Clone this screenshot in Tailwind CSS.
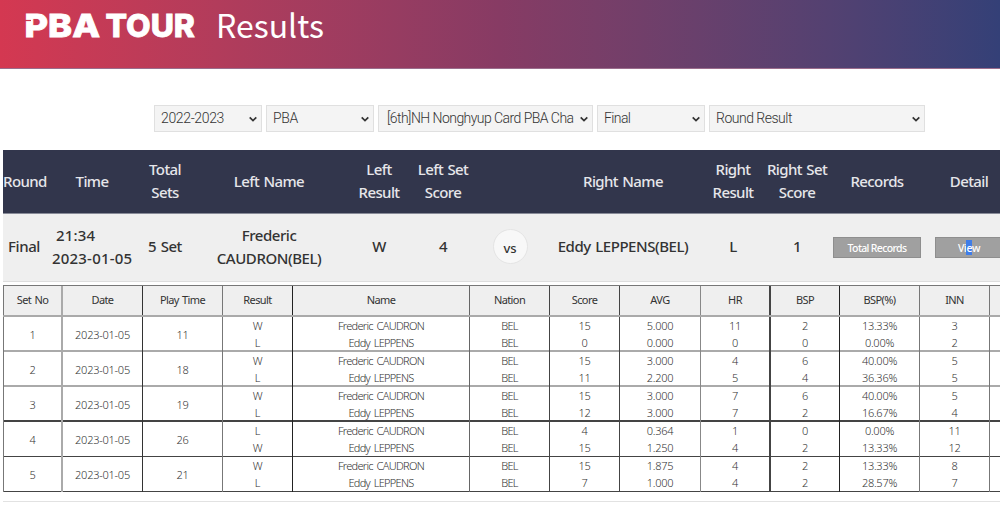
<!DOCTYPE html>
<html lang="en">
<head>
    <meta charset="UTF-8">
    <meta name="viewport" content="width=device-width, initial-scale=1.0">
    <title>PBA TOUR Results</title>
    <script src="https://cdn.jsdelivr.net/npm/@tailwindcss/browser@4"></script>
</head>
<body class="bg-white w-[1000px] h-[511px] overflow-hidden font-['Noto_Sans',sans-serif]">
    <!-- Header -->
    <header class="h-[69px] flex items-start border-b border-[#9a6d8c] bg-linear-to-r from-[#d43851] via-[#873b64] to-[#344077]">
        <svg class="w-[200px] h-[50px] shrink-0" viewBox="0 0 200 50" fill="#fff" stroke="#fff" stroke-width="0.8" font-family="Inter" font-weight="800" font-size="31.500">
            <text x="24.500" y="37.200" textLength="75.500" lengthAdjust="spacingAndGlyphs">PBA</text>
            <text x="105.500" y="37.200" textLength="89.500" lengthAdjust="spacingAndGlyphs">TOUR</text>
            <path d="M23 20.500h8" stroke="#c93852" stroke-width="1.200" />
        </svg>
        <h1 class="ml-4 mt-1 h-10 leading-10 text-[32px] text-white whitespace-nowrap font-['Noto_Sans_CJK_KR',sans-serif]">Results</h1>
    </header>

    <!-- Filters -->
    <div id="filters" class="mt-9 ml-[154px] h-[27px] flex gap-1 text-[14px] font-light text-[#333] font-['Roboto',sans-serif]"></div>

    <!-- Match summary -->
    <section class="mt-[18px] ml-[3px] w-[1010px] text-[15px] leading-[23px] font-medium text-center">
        <div class="h-16 pb-px grid grid-cols-[42px_94px_52px_156px_64px_64px_70px_156px_64px_64px_96px_88px] items-center bg-[#32364c] text-[#e6e6ea] border-b border-[#888b98] whitespace-nowrap tracking-[-0.6px] [word-spacing:1px]">
            <div>Round</div>
            <div>Time</div>
            <div>Total<br>Sets</div>
            <div>Left Name</div>
            <div>Left<br>Result</div>
            <div>Left Set<br>Score</div>
            <div></div>
            <div>Right Name</div>
            <div>Right<br>Result</div>
            <div>Right Set<br>Score</div>
            <div>Records</div>
            <div>Detail</div>
        </div>
        <div class="h-[68px] pb-0.5 grid grid-cols-[42px_94px_52px_156px_64px_64px_70px_156px_64px_64px_96px_88px] items-center bg-[#efefef] text-[#333] border-b border-[#ddd] whitespace-nowrap tracking-[-0.45px] [word-spacing:1px]">
            <div>Final</div>
            <div class="text-left pl-[7px] tracking-[0.2px]"><span class="ml-1">21:34</span><br>2023-01-05</div>
            <div>5 Set</div>
            <div>Frederic<br>CAUDRON(BEL)</div>
            <div>W</div>
            <div>4</div>
            <div class="justify-self-center size-[35px] rounded-full border border-[#e4e4e4] bg-[#f8f8f8] text-[13px] leading-[36px] tracking-normal">vs</div>
            <div>Eddy LEPPENS(BEL)</div>
            <div>L</div>
            <div>1</div>
            <button class="justify-self-center mt-px w-[88px] h-[21px] border border-[#8e8e8e] bg-[#a0a0a0] text-white text-[10.5px] leading-[21px] tracking-[-0.65px]">Total Records</button>
            <button class="justify-self-start ml-2.5 mt-px w-[88px] h-[21px] pr-5 border border-[#8e8e8e] bg-[#a0a0a0] text-white text-[10.5px] leading-[21px] tracking-[-0.4px]">Vi<span class="inline-block h-[15px] leading-[17px] align-top mt-0.5 bg-[#3f7de8]">e</span>w</button>
        </div>
    </section>

    <!-- Set table -->
    <section id="sets" class="mt-[3px] ml-[3px] w-[1040px] border-t border-[#777] text-[11px] text-center text-[#333]"></section>
    <div class="mt-[9px] ml-[3px] h-px bg-[#e2e2e2]"></div>

    <script>
        const filters = [
            ['2022-2023', 'w-[108px]', 'pl-1.5 tracking-[-0.35px]'],
            ['PBA', 'w-[108px]', 'pl-1.5 tracking-[-0.4px]'],
            ['[6th]NH Nonghyup Card PBA Cha', 'w-[215px]', 'pl-2 tracking-[-0.55px]'],
            ['Final', 'w-[108px]', 'pl-1.5 tracking-[-0.6px]'],
            ['Round Result', 'w-[216px]', 'pl-1.5 tracking-[-0.5px]'],
        ];
        document.getElementById('filters').innerHTML = filters.map(([label, width, pad]) => `
            <button class="${width} ${pad} pr-1 shrink-0 flex items-center justify-between border border-[#e0e0e0] bg-[#f4f4f4] whitespace-nowrap">
                <span>${label}</span>
                <svg class="w-2 h-2 shrink-0" viewBox="0 0 8 8" fill="none" stroke="#333" stroke-width="1.7"><path d="M0.700 2.300L4 5.600l3.300-3.300" /></svg>
            </button>`).join('');

        const heads = ['Set No', 'Date', 'Play Time', 'Result', 'Name', 'Nation', 'Score', 'AVG', 'HR', 'BSP', 'BSP(%)', 'INN', ''];
        // left edge of each column
        const edges = [
            'border-l border-[#777]', 'border-l-2 border-[#aaa]', 'border-l border-[#333]', 'border-l border-[#777]',
            'border-l border-[#222]', 'border-l border-[#666]', 'border-l border-[#444]', 'border-l border-[#444]',
            'border-l border-[#888]', 'border-l-2 border-[#444]', 'border-l border-[#222]', 'border-l border-[#777]', 'border-l border-[#777]',
        ];
        const names = ['Frederic CAUDRON', 'Eddy LEPPENS'];
        const nation = ['BEL', 'BEL'];
        const date = '2023-01-05';
        const rows = [
            ['1', date, '11', ['W', 'L'], names, nation, ['15', '0'], ['5.000', '0.000'], ['11', '0'], ['2', '0'], ['13.33%', '0.00%'], ['3', '2'], ''],
            ['2', date, '18', ['W', 'L'], names, nation, ['15', '11'], ['3.000', '2.200'], ['4', '5'], ['6', '4'], ['40.00%', '36.36%'], ['5', '5'], ''],
            ['3', date, '19', ['W', 'L'], names, nation, ['15', '12'], ['3.000', '3.000'], ['7', '7'], ['6', '2'], ['40.00%', '16.67%'], ['5', '4'], ''],
            ['4', date, '26', ['L', 'W'], names, nation, ['4', '15'], ['0.364', '1.250'], ['1', '4'], ['0', '2'], ['0.00%', '13.33%'], ['11', '12'], ''],
            ['5', date, '21', ['W', 'L'], names, nation, ['15', '7'], ['1.875', '1.000'], ['4', '4'], ['2', '2'], ['13.33%', '28.57%'], ['8', '7'], ''],
        ];
        const rules = ['border-b-2 border-[#aaa]', 'border-b-2 border-[#aaa]', 'border-b-2 border-[#444]', 'border-b border-[#444]', 'border-b border-[#444]'];
        const cols = 'grid grid-cols-[58px_81px_80px_70px_177px_80px_70px_81px_69px_70px_80px_70px_54px]';
        const cell = (c, i, extra) => `<div class="${edges[i]} ${extra} flex flex-col items-center justify-center whitespace-nowrap">${[].concat(c).map(t => `<span>${t}</span>`).join('')}</div>`;

        document.getElementById('sets').innerHTML =
            `<div class="${cols} h-[31px] bg-[#efefef] text-[#333] border-b-2 border-[#aaa] [word-spacing:1px]">${heads.map((h, i) => cell(h, i, 'leading-4 pb-0.5 tracking-[-0.6px]')).join('')}</div>` +
            rows.map((r, n) => `<div class="${cols} h-[35px] font-light [word-spacing:1.5px] ${rules[n]}">${r.map((c, i) => cell(c, i, i === 4 || i === 5 ? 'leading-[17px] pb-px tracking-[-0.7px]' : 'leading-[17px] pb-px tracking-[-0.25px]')).join('')}</div>`).join('');
    </script>
</body>
</html>
